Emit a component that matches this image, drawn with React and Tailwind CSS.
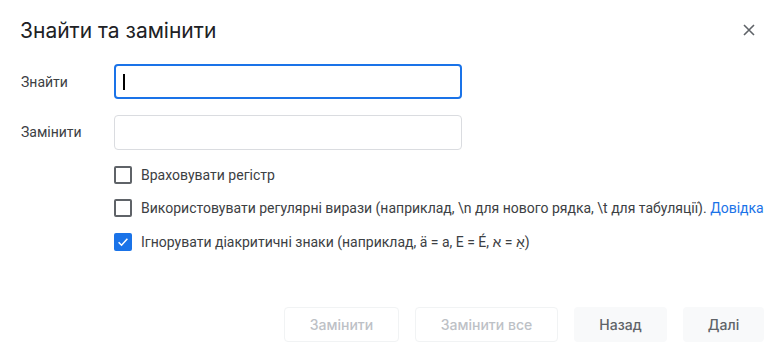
import React from "react";

function Checkbox({ checked }) {
  if (checked) {
    return (
      <div className="w-[18px] h-[18px] rounded-[2px] bg-[#1a73e8] flex items-center justify-center shrink-0">
        <svg width="14" height="14" viewBox="0 0 24 24" fill="none">
          <path d="M4.5 12.5l5 5 10-11" stroke="#fff" strokeWidth="2.6" fill="none" />
        </svg>
      </div>
    );
  }
  return <div className="w-[18px] h-[18px] rounded-[2px] border-2 border-[#5f6368] shrink-0" />;
}

export default function App() {
  return (
    <div className="w-[779px] h-[356px] bg-white relative text-[#3c4043]" style={{ fontFamily: "Roboto, 'Liberation Sans', sans-serif" }}>
      <div className="flex items-start justify-between pl-[20px] pr-[20px] pt-[17px]">
        <div className="text-[21px] leading-[28px] text-[#202124]" style={{ fontFamily: "Inter, Roboto, sans-serif" }}>
          Знайти та замінити
        </div>
        <button className="w-[20px] h-[20px] flex items-center justify-center mt-[3px]">
          <svg width="12" height="12" viewBox="0 0 12 12">
            <path d="M1 1L11 11M11 1L1 11" stroke="#5f6368" strokeWidth="1.6" />
          </svg>
        </button>
      </div>

      <div className="flex flex-col gap-[16px] pl-[21px] mt-[19px]">
        <div className="flex items-center">
          <div className="w-[93px] text-[14px] pt-[1px]">Знайти</div>
          <div className="w-[348px] h-[35px] rounded-[4px] border-2 border-[#1a73e8] flex items-center pl-[7px]">
            <div className="w-[1.5px] h-[16px] bg-black" />
          </div>
        </div>
        <div className="flex items-center">
          <div className="w-[93px] text-[14px]">Замінити</div>
          <div className="w-[348px] h-[35px] rounded-[4px] border border-[#dadce0]" />
        </div>
      </div>

      <div className="flex flex-col gap-[15px] pl-[114px] mt-[16px] text-[14px]">
        <div className="flex items-center gap-[9px] h-[18px]">
          <Checkbox />
          <span>Враховувати регістр</span>
        </div>
        <div className="flex items-center gap-[9px] h-[18px] whitespace-nowrap">
          <Checkbox />
          <span>
            Використовувати регулярні вирази (наприклад, \n для нового рядка, \t для табуляції).{" "}
            <span className="text-[#1a73e8]">Довідка</span>
          </span>
        </div>
        <div className="flex items-center gap-[9px] h-[18px] mt-[1px]">
          <Checkbox checked />
          <span>{"Ігнорувати діакритичні знаки (наприклад, ä = a, E = É, \u05D0\u200E = \u200E\u05D0\u05B7\u200E)"}</span>
        </div>
      </div>

      <div className="absolute left-0 right-0 top-[307px] flex justify-end gap-[16px] pr-[15px] text-[14px] font-medium" style={{ fontFamily: "Inter, Roboto, sans-serif" }}>
        <button className="w-[115px] h-[35px] rounded-[4px] border border-[#f1f3f4] text-[#bdc1c6]">Замінити</button>
        <button className="w-[143px] h-[35px] rounded-[4px] border border-[#f1f3f4] text-[#bdc1c6]">Замінити все</button>
        <button className="w-[93px] h-[35px] rounded-[4px] bg-[#f8f9fa] text-[#5f6368]">Назад</button>
        <button className="w-[81px] h-[35px] rounded-[4px] bg-[#f8f9fa] text-[#5f6368]">Далі</button>
      </div>
    </div>
  );
}
